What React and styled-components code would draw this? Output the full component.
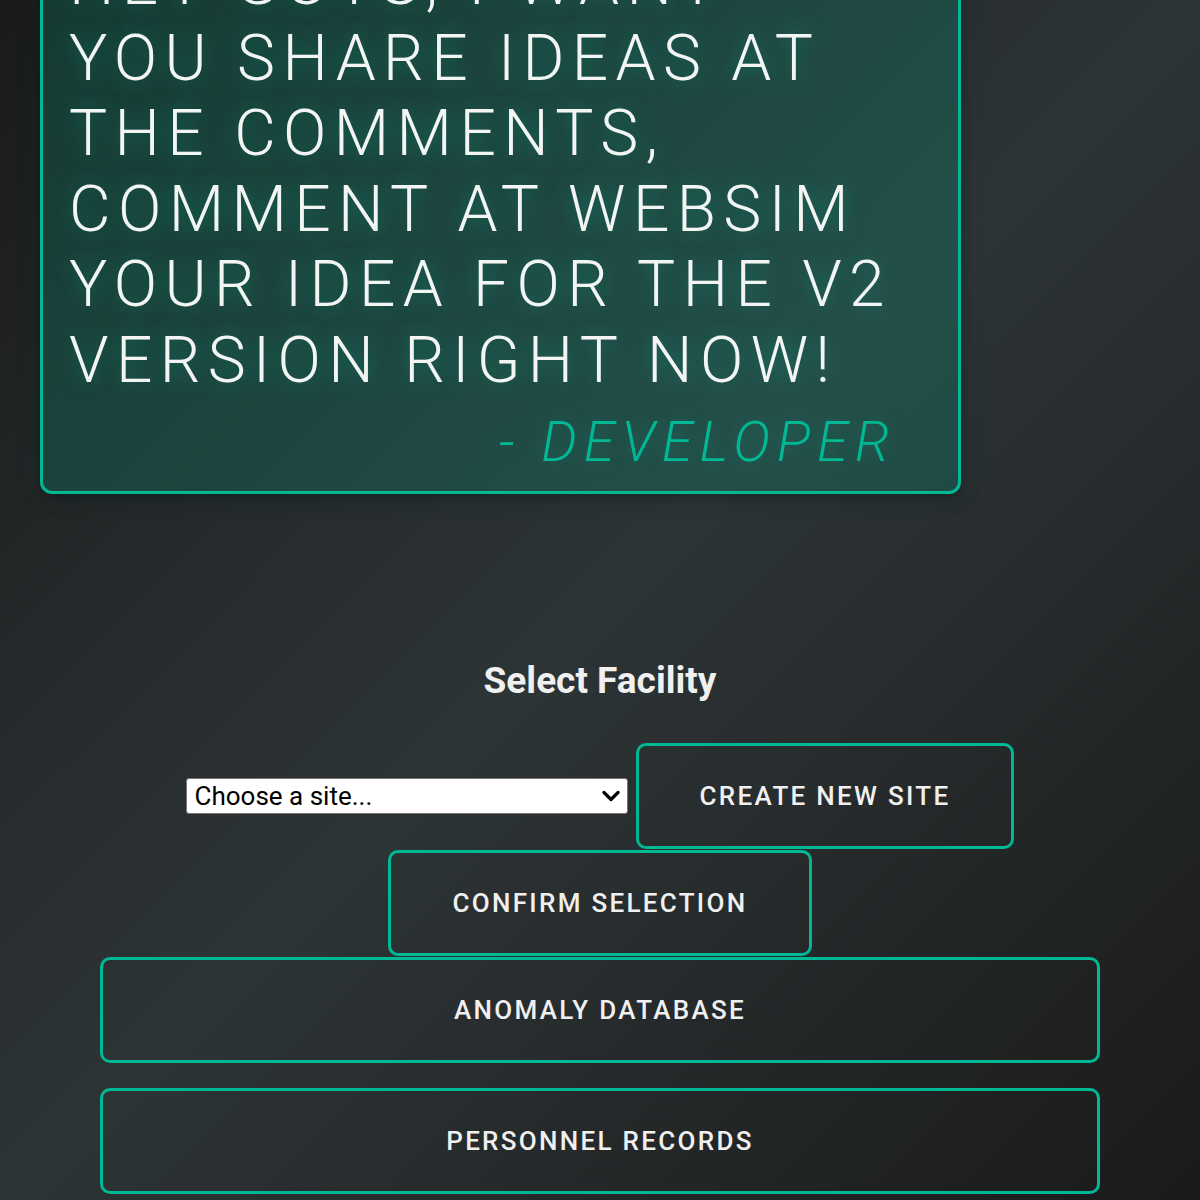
import React from 'react';
import styled, { createGlobalStyle } from 'styled-components';

const GlobalStyle = createGlobalStyle`
    html, body {
        margin: 0;
        padding: 0;
    }
    body {
        min-height: 100vh;
        background: linear-gradient(135deg, #1a1a1a 0%, #2d3436 50%, #1a1a1a 100%);
        background-attachment: fixed;
        font-family: Roboto, "Noto Sans", sans-serif;
        color: #f0f0f0;
        overflow: hidden;
    }
`;

const Page = styled.div`
    padding: 0 40px 40px;
`;

const QuoteCard = styled.div`
    box-sizing: border-box;
    width: 921px;
    margin-top: -88px;
    padding: 30px 62px 16px 26px;
    border: 3px solid #00b894;
    border-radius: 12px;
    background: rgba(0, 184, 148, 0.2);
    box-shadow: 0 4px 18px rgba(0, 0, 0, 0.35), 0 0 30px rgba(0, 184, 148, 0.08);
`;

const QuoteText = styled.p`
    margin: 0;
    font-size: 64px;
    font-weight: 300;
    line-height: 75.5px;
    letter-spacing: 7.4px;
    text-transform: uppercase;
    color: #f2f5f4;
    text-shadow: 0 0 20px rgba(0, 184, 148, 0.45);
`;

const Author = styled.p`
    margin: 11px 0 0;
    font-size: 56px;
    font-weight: 300;
    font-style: italic;
    letter-spacing: 6.8px;
    text-align: right;
    text-transform: uppercase;
    color: #00b894;
    text-shadow: 0 0 18px rgba(0, 184, 148, 0.35);
`;

const Section = styled.section`
    max-width: 1000px;
    margin: 165px auto 0;
    display: flex;
    flex-direction: column;
    align-items: center;
`;

const Title = styled.h2`
    margin: 0 0 41px;
    font-size: 37px;
    font-weight: 700;
    line-height: 43px;
    color: #f0f0f0;
`;

const Controls = styled.div`
    width: 100%;
    display: flex;
    flex-wrap: wrap;
    justify-content: center;
    align-items: center;
    gap: 1px 8px;
`;

const SelectWrap = styled.div`
    position: relative;
    width: 442px;
    height: 36px;
`;

const SiteSelect = styled.select`
    appearance: none;
    box-sizing: border-box;
    width: 100%;
    height: 100%;
    font-family: Roboto, "Liberation Sans", sans-serif;
    font-size: 26px;
    color: #000;
    background: #fff;
    border: 1px solid #767676;
    border-radius: 3px;
    padding: 0 40px 0 8px;
`;

const Chevron = styled.svg`
    position: absolute;
    right: 8px;
    top: 12px;
    width: 18px;
    height: 12px;
    pointer-events: none;
`;

const ActionButton = styled.button`
    box-sizing: border-box;
    flex-basis: ${(p) => (p.$wide ? '100%' : 'auto')};
    padding: 35px 61px;
    background: transparent;
    border: 3px solid #00b894;
    border-radius: 10px;
    color: #f0f0f0;
    font-family: Roboto, "Noto Sans", sans-serif;
    font-size: 26px;
    font-weight: 500;
    line-height: 30px;
    letter-spacing: 2.3px;
    text-transform: uppercase;
    cursor: pointer;
`;

const NavList = styled.div`
    width: 100%;
    margin-top: 25px;
    display: flex;
    flex-direction: column;
    gap: 25px;
`;

const quoteLines = [
    'Hey guys, I want',
    'you share ideas at',
    'the comments,',
    'comment at websim',
    'your idea for the v2',
    'version right now!',
];

const App = () => {
    return (
        <>
            <GlobalStyle />
            <Page>
                <QuoteCard>
                    <QuoteText>
                        {quoteLines.map((line, i) => (
                            <React.Fragment key={i}>
                                {line}
                                {i < quoteLines.length - 1 && <br />}
                            </React.Fragment>
                        ))}
                    </QuoteText>
                    <Author>- Developer</Author>
                </QuoteCard>

                <Section>
                    <Title>Select Facility</Title>
                    <Controls>
                        <SelectWrap>
                            <SiteSelect defaultValue="">
                                <option value="">Choose a site...</option>
                            </SiteSelect>
                            <Chevron viewBox="0 0 18 12">
                                <path d="M2 2.5 L9 9.5 L16 2.5" fill="none" stroke="#000" strokeWidth="3.2" strokeLinecap="round" strokeLinejoin="round" />
                            </Chevron>
                        </SelectWrap>
                        <ActionButton>Create New Site</ActionButton>
                        <ActionButton>Confirm Selection</ActionButton>
                        <ActionButton $wide>Anomaly Database</ActionButton>
                    </Controls>
                    <NavList>
                        <ActionButton $wide>Personnel Records</ActionButton>
                    </NavList>
                </Section>
            </Page>
        </>
    );
};

export default App;
